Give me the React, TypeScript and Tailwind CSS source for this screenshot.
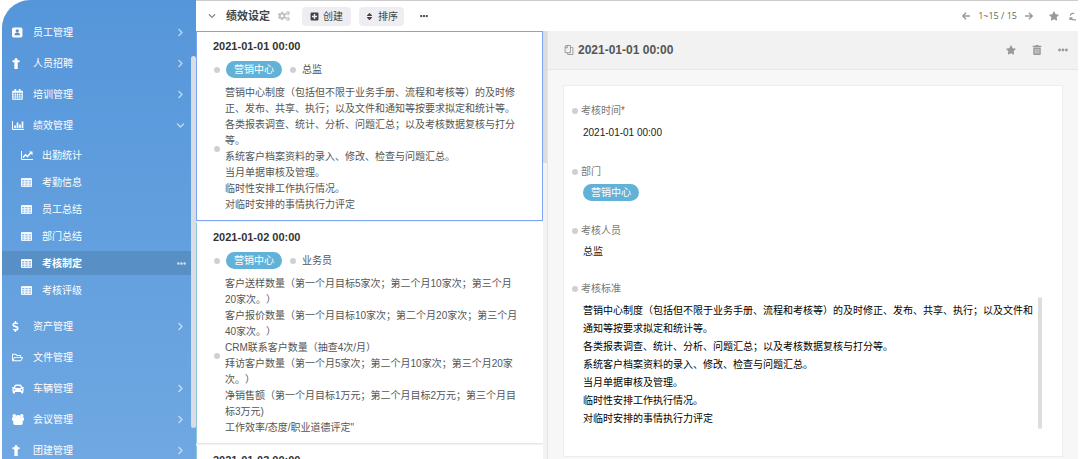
import React from "react";
import {
  FaCar,
  FaChevronDown,
  FaChevronRight,
  FaCogs,
  FaDollarSign,
  FaEllipsisH,
  FaPlusSquare,
  FaRegCopy,
  FaRegFolderOpen,
  FaSort,
  FaStar,
  FaTrashAlt,
} from "react-icons/fa";

interface MenuItem {
  label: string;
  icon: React.ReactNode;
  arrow?: "right" | "down";
  children?: { label: string; icon: React.ReactNode; active?: boolean }[];
}

interface AssessmentRecord {
  date: string;
  department: string;
  role: string;
  lines: string[];
}

const ContactIcon = () => (
  <svg viewBox="0 0 20 20" className="size-[11px]">
    <rect x="0" y="1" width="19" height="18" rx="3" fill="currentColor" />
    <circle cx="9.500" cy="7" r="3" fill="#5c8fc0" />
    <path d="M4.500 15c0-3 1.500-5 5-5s5 2 5 5z" fill="#5c8fc0" />
  </svg>
);

const PersonIcon = () => (
  <svg viewBox="0 0 10 12" className="h-[11px] w-[9px]" fill="currentColor">
    <path d="M4.500 0a1.700 1.700 0 0 1 1.700 1.700V2.300H7.500a1.100 1.100 0 0 1 0 2.400H6.400V12H2.600V4.700H1.500a1.100 1.100 0 0 1 0-2.400h1.300V1.700A1.700 1.700 0 0 1 4.500 0z" />
  </svg>
);

const CalendarIcon = () => (
  <svg viewBox="0 0 20 20" className="size-[11px]" fill="none" stroke="currentColor">
    <path strokeWidth="2" d="M1.500 5v13.500h17V5" />
    <path strokeWidth="4" d="M.5 5h19" />
    <path strokeWidth="3" d="M6 0v5M14 0v5" />
    <path strokeWidth="1.300" d="M6 7v12M10 7v12M14 7v12M1 10.500h18M1 14.500h18" />
  </svg>
);

const BarChartIcon = () => (
  <svg viewBox="0 0 24 18" className="h-[9px] w-[12px]" fill="none" stroke="currentColor">
    <path strokeWidth="2" d="M1 0v17h23" />
    <path strokeWidth="3.400" d="M6 14.500V9M11 14.500V3M16 14.500V7M21 14.500V1" />
  </svg>
);

const LineChartIcon = () => (
  <svg viewBox="0 0 24 18" className="h-[9px] w-[12px]" fill="none" stroke="currentColor">
    <path strokeWidth="2" d="M1 0v17h23" />
    <path strokeWidth="3" d="m4 13 5-5.500 4 3.500 7-7.500" />
    <path fill="currentColor" stroke="none" d="M15.500 1H23v7.500z" />
  </svg>
);

const TableIcon = () => (
  <svg viewBox="0 0 20 16" className="h-[9px] w-[11px]">
    <rect width="20" height="16" rx="1.500" fill="currentColor" fillOpacity="0.3" />
    <path
      fill="none"
      stroke="currentColor"
      strokeWidth="1.800"
      d="M1 1h18v14H1zM0 2.500h20M1 6.800h18M1 11h18M7 2v13M13 2v13"
    />
  </svg>
);

const UsersIcon = () => (
  <svg viewBox="0 0 24 22" className="h-[11px] w-[12px]" fill="currentColor">
    <circle cx="4.500" cy="3.500" r="3.500" />
    <circle cx="19.500" cy="3.500" r="3.500" />
    <circle cx="12" cy="7" r="5" />
    <path d="M0 12V9c0-1.500 1-2.500 2.500-2.500h19C23 6.500 24 7.500 24 9v3c0 1-1 1.500-2 1.500h-1c.5 1.500.5 3 .5 5 0 2-1.500 3.500-3.500 3.500H6c-2 0-3.500-1.500-3.500-3.500 0-2 0-3.500.5-5H2c-1 0-2-.5-2-1.500z" />
  </svg>
);

const ArrowIcon = ({ flip }: { flip?: boolean }) => (
  <svg
    viewBox="0 0 10 10"
    className={`size-[8px] ${flip ? "rotate-180" : ""}`}
    fill="none"
    stroke="currentColor"
    strokeWidth="1.700"
  >
    <path d="M5 1 1 5l4 4M1 5h9" />
  </svg>
);

const RefreshIcon = () => (
  <svg viewBox="0 0 8 10" className="h-[9px] w-[7px]" fill="none" stroke="currentColor" strokeWidth="1.500">
    <path d="M6 1.500H4C2.500 1.500 1.800 2.500 1.500 4M1.200 9V6.500H4M2 7.500c1 1 2.500 1.500 6 1.300" />
  </svg>
);

const menu: MenuItem[] = [
  { label: "员工管理", icon: <ContactIcon />, arrow: "right" },
  { label: "人员招聘", icon: <PersonIcon />, arrow: "right" },
  { label: "培训管理", icon: <CalendarIcon />, arrow: "right" },
  {
    label: "绩效管理",
    icon: <BarChartIcon />,
    arrow: "down",
    children: [
      { label: "出勤统计", icon: <LineChartIcon /> },
      { label: "考勤信息", icon: <TableIcon /> },
      { label: "员工总结", icon: <TableIcon /> },
      { label: "部门总结", icon: <TableIcon /> },
      { label: "考核制定", icon: <TableIcon />, active: true },
      { label: "考核评级", icon: <TableIcon /> },
    ],
  },
  { label: "资产管理", icon: <FaDollarSign className="-ml-0.5" />, arrow: "right" },
  { label: "文件管理", icon: <FaRegFolderOpen /> },
  { label: "车辆管理", icon: <FaCar className="text-[12px]" />, arrow: "right" },
  { label: "会议管理", icon: <UsersIcon />, arrow: "right" },
  { label: "团建管理", icon: <PersonIcon />, arrow: "right" },
];

const records: AssessmentRecord[] = [
  {
    date: "2021-01-01 00:00",
    department: "营销中心",
    role: "总监",
    lines: [
      "营销中心制度（包括但不限于业务手册、流程和考核等）的及时修正、发布、共享、执行；以及文件和通知等按要求拟定和统计等。",
      "各类报表调查、统计、分析、问题汇总；以及考核数据复核与打分等。",
      "系统客户档案资料的录入、修改、检查与问题汇总。",
      "当月单据审核及管理。",
      "临时性安排工作执行情况。",
      "对临时安排的事情执行力评定",
    ],
  },
  {
    date: "2021-01-02 00:00",
    department: "营销中心",
    role: "业务员",
    lines: [
      "客户送样数量（第一个月目标5家次；第二个月10家次；第三个月20家次。）",
      "客户报价数量（第一个月目标10家次；第二个月20家次；第三个月40家次。）",
      "CRM联系客户数量（抽查4次/月）",
      "拜访客户数量（第一个月5家次；第二个月10家次；第三个月20家次。）",
      "净销售额（第一个月目标1万元；第二个月目标2万元；第三个月目标3万元)",
      '工作效率/态度/职业道德评定"',
    ],
  },
  {
    date: "2021-01-03 00:00",
    department: "营销中心",
    role: "业务员",
    lines: [],
  },
];

const Dot = () => <span className="size-[6px] shrink-0 rounded-full bg-[#d0d0d0]" />;

const Tag = ({ children }: { children: React.ReactNode }) => (
  <span className="rounded-full bg-[#62b2d8] px-2 text-[10px] leading-[17px] text-white">
    {children}
  </span>
);

const Sidebar = () => (
  <div className="flex w-[196px] shrink-0 bg-white pl-0.5">
    <div className="relative flex-1 overflow-hidden rounded-tl-[28px] bg-linear-to-b from-[#5596da] to-[#6fa8e2] text-white">
      <nav className="pt-[17px]">
        {menu.map((item) => (
          <div key={item.label}>
            <button type="button" className="flex h-[31px] w-full items-center pr-[11px] pl-2.5 text-left">
              <span className="w-[21px] text-[11px]">{item.icon}</span>
              <span className="flex-1">{item.label}</span>
              <span className="text-[9px] text-white/60">
                {item.arrow === "right" && <FaChevronRight />}
                {item.arrow === "down" && <FaChevronDown />}
              </span>
            </button>
            {item.children && (
              <div className="mb-[9px] flex flex-col gap-[3px] pt-0.5">
                {item.children.map((child) => (
                  <button
                    key={child.label}
                    type="button"
                    className={`flex h-6 w-full items-center pr-2.5 pl-[19px] text-left ${
                      child.active ? "bg-[#5890c6] font-bold" : ""
                    }`}
                  >
                    <span className="w-[21px]">{child.icon}</span>
                    <span className="flex-1">{child.label}</span>
                    {child.active && <FaEllipsisH className="text-[9px] text-white/70" />}
                  </button>
                ))}
              </div>
            )}
          </div>
        ))}
      </nav>
      {/* Scrollbar thumb */}
      <div className="absolute top-14 right-0 h-[372px] w-[5px] rounded-full bg-[#d9dde3]" />
    </div>
  </div>
);

const Toolbar = () => (
  <header className="flex h-[31px] shrink-0 items-center border-t border-[#cccccc] bg-white pr-0.5 pl-3 text-[#444444]">
    <FaChevronDown className="text-[8px] text-[#888888]" />
    <h1 className="ml-2.5 text-[11px] font-bold">绩效设定</h1>
    <FaCogs className="ml-2 text-[12px] text-[#c0c0c0]" />
    <button type="button" className="ml-3 flex h-[19px] items-center gap-1 rounded-sm bg-[#eeeef2] px-2">
      <FaPlusSquare className="text-[9px]" />
      创建
    </button>
    <button type="button" className="ml-2 flex h-[19px] items-center gap-1 rounded-sm bg-[#eeeef2] px-1.5">
      <FaSort className="text-[9px]" />
      排序
    </button>
    <button type="button" aria-label="更多" className="ml-4">
      <FaEllipsisH className="text-[8px]" />
    </button>
    <div className="ml-auto flex items-center text-[#999999]">
      <button type="button" aria-label="上一页">
        <ArrowIcon />
      </button>
      <span className="mx-2 font-['Open_Sans',sans-serif] text-[9px] text-[#666666]">1~15 / 15</span>
      <button type="button" aria-label="下一页">
        <ArrowIcon flip />
      </button>
      <button type="button" aria-label="收藏" className="mr-2.5 ml-4">
        <FaStar className="text-[10px]" />
      </button>
      <button type="button" aria-label="刷新">
        <RefreshIcon />
      </button>
    </div>
  </header>
);

const RecordCard = ({ record, selected }: { record: AssessmentRecord; selected: boolean }) => (
  <article
    className={`mb-px border bg-white pt-[7px] pr-6 pb-[7px] pl-4 ${
      selected ? "border-[#7da4f0]" : "border-white border-b-[#e6e6e6] border-l-[#8fc6df]"
    }`}
  >
    <h2 className="text-[11px] leading-[14px] font-bold text-[#333333]">{record.date}</h2>
    <div className="mt-2 flex items-center pl-px">
      <Dot />
      <span className="mr-2 ml-1.5 flex">
        <Tag>{record.department}</Tag>
      </span>
      <Dot />
      <span className="ml-1.5">{record.role}</span>
    </div>
    <div className="mt-[7px] flex items-center pl-px">
      <Dot />
      <div className="ml-[5px] leading-4">
        {record.lines.map((line) => (
          <p key={line}>{line}</p>
        ))}
      </div>
    </div>
  </article>
);

const RecordList = () => (
  <section className="flex w-[352px] shrink-0 border-r border-[#e4e4e4] bg-[#f3f3f3] text-[#555555]">
    <div className="min-w-0 flex-1 overflow-hidden">
      {records.map((record, index) => (
        <RecordCard key={record.date} record={record} selected={index === 0} />
      ))}
    </div>
    <div className="h-[132px] w-1 bg-[#dddddd]" />
  </section>
);

const Field = ({
  label,
  required,
  children,
}: {
  label: string;
  required?: boolean;
  children: React.ReactNode;
}) => (
  <div>
    <dt className="flex items-center gap-[3px] leading-4 text-[#777777]">
      <Dot />
      <span>
        {label}
        {required && <span className="text-[#e03030]">*</span>}
      </span>
    </dt>
    <dd className="pl-[11px] text-[#222222]">{children}</dd>
  </div>
);

const RecordDetail = ({ record }: { record: AssessmentRecord }) => (
  <section className="flex min-w-0 flex-1 flex-col bg-[#f7f7f7]">
    <div className="flex h-[39px] shrink-0 items-center border-b border-[#e6e6e6] bg-[#f2f2f2] pr-2.5 pl-4 text-[#999999]">
      <FaRegCopy className="-scale-x-100 text-[10px]" />
      <h2 className="ml-1 text-[12px] font-bold text-[#555555]">{record.date}</h2>
      <div className="ml-auto flex items-center gap-4 text-[10px]">
        <button type="button" aria-label="收藏">
          <FaStar />
        </button>
        <button type="button" aria-label="删除">
          <FaTrashAlt />
        </button>
        <button type="button" aria-label="更多">
          <FaEllipsisH />
        </button>
      </div>
    </div>
    <dl className="mx-[15px] mt-[15px] mb-0.5 flex-1 border border-[#ededed] bg-white pt-[17px] pr-5 pl-2">
      <Field label="考核时间" required>
        <p className="mt-[7px] mb-6 leading-[14px]">{record.date}</p>
      </Field>
      <Field label="部门">
        <p className="mt-1 mb-[22px] flex">
          <Tag>{record.department}</Tag>
        </p>
      </Field>
      <Field label="考核人员">
        <p className="mt-1.5 mb-[22px] leading-[14px]">{record.role}</p>
      </Field>
      <Field label="考核标准">
        <div className="flex text-black">
          <div className="min-w-0 flex-1 pt-[5px] leading-[18px]">
            {record.lines.map((line) => (
              <p key={line}>{line}</p>
            ))}
          </div>
          <div className="h-[132px] w-1 rounded-full bg-[#dddddd]" />
        </div>
      </Field>
    </dl>
  </section>
);

const App = () => {
  return (
    <div className="flex h-screen overflow-hidden bg-white pr-0.5 font-['Liberation_Sans','Noto_Sans_CJK_SC',sans-serif] text-[10px] [text-spacing-trim:space-all]">
      <Sidebar />
      <main className="flex min-w-0 flex-1 flex-col">
        <Toolbar />
        <div className="flex min-h-0 flex-1">
          <RecordList />
          <RecordDetail record={records[0]} />
        </div>
      </main>
    </div>
  );
};

export default App;
